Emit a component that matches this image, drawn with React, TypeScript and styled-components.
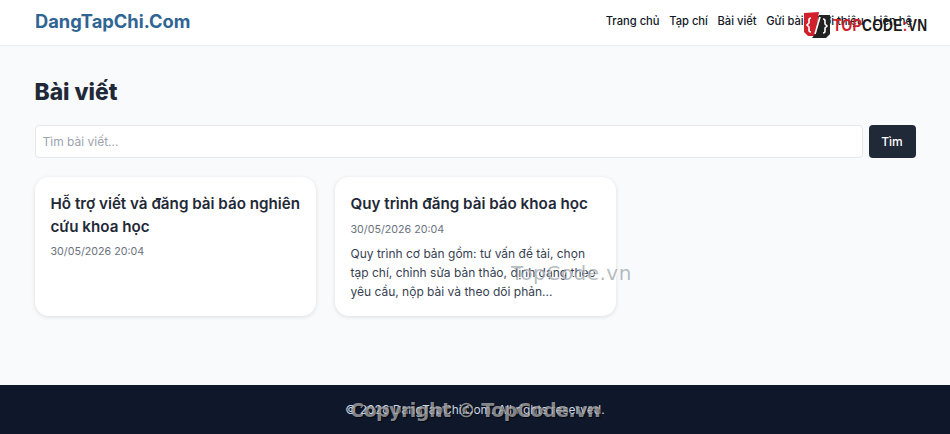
import React from "react";
import styled, { createGlobalStyle } from "styled-components";

const Global = createGlobalStyle`
  html, body { margin: 0; padding: 0; background: #f8fafc; }
  body { font-family: Inter, "Noto Sans", sans-serif; color: #1f2937; }
  * { box-sizing: border-box; }
`;

const Page = styled.div`
  position: relative;
  width: 950px;
  height: 434px;
  display: flex;
  flex-direction: column;
  overflow: hidden;
`;

const Header = styled.header`
  height: 46px;
  flex: none;
  background: #fff;
  border-bottom: 1px solid #e9edf2;
  padding: 0 35px;
  display: flex;
  align-items: center;
  justify-content: space-between;
`;

const Brand = styled.a`
  font-size: 18.3px;
  font-weight: 700;
  color: #2f6593;
  margin-top: -4px;
`;

const Nav = styled.nav`
  display: flex;
  gap: 9.6px;
  margin-top: -4px;
  margin-right: 3px;
`;

const NavLink = styled.a`
  font-size: 11.2px;
  font-weight: 500;
  color: #111827;
`;

const Main = styled.main`
  flex: 1;
  padding: 30px 34.5px 0 34.5px;
`;

const Title = styled.h1`
  margin: 0 0 17px;
  font-size: 22.8px;
  line-height: 32px;
  font-weight: 800;
  color: #1f2937;
`;

const SearchRow = styled.form`
  display: flex;
  gap: 6px;
  margin-bottom: 19px;
`;

const SearchInput = styled.div`
  flex: 1;
  height: 33px;
  display: flex;
  align-items: center;
  padding: 0 7px;
  background: #fff;
  border: 1px solid #e5e7eb;
  border-radius: 4px;
  font-size: 12px;
  color: #9ca3af;
`;

const SearchButton = styled.div`
  width: 47px;
  height: 33px;
  display: flex;
  align-items: center;
  justify-content: center;
  background: #1f2937;
  border-radius: 4px;
  font-size: 12px;
  font-weight: 500;
  color: #fff;
`;

const Grid = styled.div`
  display: grid;
  grid-template-columns: repeat(3, 1fr);
  gap: 19px;
`;

const Card = styled.article`
  height: 139px;
  padding: 16px 14px 16px 16px;
  background: #fff;
  border-radius: 14px;
  box-shadow: 0 1px 4px rgba(15, 23, 42, 0.12);
`;

const CardTitle = styled.h3`
  margin: 0 0 6px;
  font-size: 15.2px;
  line-height: 22.5px;
  font-weight: 600;
  color: #1f2937;
`;

const CardDate = styled.div`
  font-size: 10.7px;
  line-height: 16px;
  color: #6b7280;
  margin-bottom: 6px;
`;

const CardText = styled.p`
  margin: 0;
  font-size: 12px;
  line-height: 19px;
  color: #374151;
  padding-right: 2px;
`;

const Footer = styled.footer`
  height: 49px;
  flex: none;
  background: #0f172a;
  display: flex;
  align-items: center;
  justify-content: center;
  font-size: 12px;
  color: #cbd5e1;
`;

const LogoMark = styled.div`
  position: absolute;
  left: 803px;
  top: 12px;
  display: flex;
  align-items: center;
  gap: 3px;
`;

const LogoText = styled.span`
  display: inline-block;
  font-family: "Liberation Sans", sans-serif;
  font-size: 16.5px;
  font-weight: 700;
  letter-spacing: 0.4px;
  color: #1a1a1a;
  transform: scaleX(0.83);
  transform-origin: left center;
  margin-top: 1px;
`;

const LogoRed = styled.span`
  color: #d0202a;
`;

const CenterMark = styled.div`
  position: absolute;
  left: 511px;
  top: 261px;
  font-family: "DejaVu Sans", sans-serif;
  font-size: 20px;
  letter-spacing: 0.5px;
  color: rgba(120, 130, 140, 0.55);
  text-shadow: 1px 1px 0 rgba(255, 255, 255, 0.7);
`;

const CopyMark = styled.div`
  position: absolute;
  left: 350px;
  top: 399px;
  font-family: "DejaVu Sans", sans-serif;
  font-size: 19px;
  font-weight: 700;
  letter-spacing: -0.5px;
  color: rgba(205, 205, 205, 0.65);
  text-shadow: 1px 1px 1px rgba(0, 0, 0, 0.6);
  white-space: nowrap;
`;

export default function App() {
  return (
    <Page>
      <Global />
      <Header>
        <Brand>DangTapChi.Com</Brand>
        <Nav>
          <NavLink>Trang chủ</NavLink>
          <NavLink>Tạp chí</NavLink>
          <NavLink>Bài viết</NavLink>
          <NavLink>Gửi bài</NavLink>
          <NavLink>Giới thiệu</NavLink>
          <NavLink>Liên hệ</NavLink>
        </Nav>
      </Header>
      <Main>
        <Title>Bài viết</Title>
        <SearchRow>
          <SearchInput>Tìm bài viết...</SearchInput>
          <SearchButton>Tìm</SearchButton>
        </SearchRow>
        <Grid>
          <Card>
            <CardTitle>Hỗ trợ viết và đăng bài báo nghiên cứu khoa học</CardTitle>
            <CardDate>30/05/2026 20:04</CardDate>
          </Card>
          <Card>
            <CardTitle>Quy trình đăng bài báo khoa học</CardTitle>
            <CardDate>30/05/2026 20:04</CardDate>
            <CardText>
              Quy trình cơ bản gồm: tư vấn đề tài, chọn tạp chí, chỉnh sửa bản thảo, định dạng theo
              yêu cầu, nộp bài và theo dõi phản...
            </CardText>
          </Card>
        </Grid>
      </Main>
      <Footer>© 2026 DangTapChi.Com. All rights reserved.</Footer>
      <LogoMark>
        <svg width="27" height="26" viewBox="0 0 27 26">
          <path d="M1 1L16 0L12 24H5L1 20z" fill="#d0202a" />
          <path d="M16 3H27V22L23 26H9L12 22z" fill="#222" />
          <path d="M8 6q-2 0-2 2v3l-2 2 2 2v3q0 2 2 2" fill="none" stroke="#fff" strokeWidth="1.6" />
          <path d="M20 7q2 0 2 2v3l2 2-2 2v3q0 2-2 2" fill="none" stroke="#fff" strokeWidth="1.6" />
          <path d="M17 5l-5 17" fill="none" stroke="#fff" strokeWidth="1.6" />
        </svg>
        <LogoText>
          <LogoRed>TOP</LogoRed>CODE<LogoRed>:</LogoRed>VN
        </LogoText>
      </LogoMark>
      <CenterMark>TopCode.vn</CenterMark>
      <CopyMark>Copyright © TopCode.vn</CopyMark>
    </Page>
  );
}
